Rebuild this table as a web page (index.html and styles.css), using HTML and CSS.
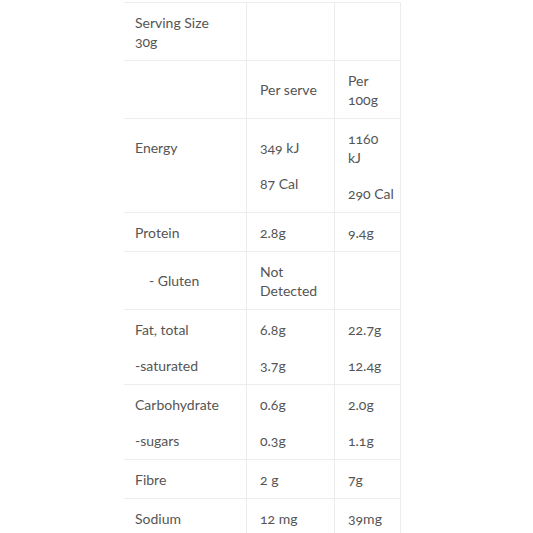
FILE: index.html
```html
<!DOCTYPE html>
<html>
<head>
<meta charset="utf-8">
<link rel="stylesheet" href="styles.css">
</head>
<body>
<div class="wrap">
<table class="nutrition">
  <colgroup>
    <col class="c1">
    <col class="c2">
    <col class="c3">
  </colgroup>
  <tr>
    <td class="label">Serving Size<br>30g</td>
    <td></td>
    <td></td>
  </tr>
  <tr>
    <td class="label"></td>
    <td>Per serve</td>
    <td>Per<br>100g</td>
  </tr>
  <tr>
    <td class="label"><p>Energy</p><p>&nbsp;</p></td>
    <td><p>349 kJ</p><p>87 Cal</p></td>
    <td><p>1160<br>kJ</p><p>290 Cal</p></td>
  </tr>
  <tr>
    <td class="label">Protein</td>
    <td>2.8g</td>
    <td>9.4g</td>
  </tr>
  <tr>
    <td class="label"><span class="indent">- Gluten</span></td>
    <td>Not<br>Detected</td>
    <td></td>
  </tr>
  <tr>
    <td class="label"><p>Fat, total</p><p>-saturated</p></td>
    <td><p>6.8g</p><p>3.7g</p></td>
    <td><p>22.7g</p><p>12.4g</p></td>
  </tr>
  <tr>
    <td class="label"><p>Carbohydrate</p><p>-sugars</p></td>
    <td><p>0.6g</p><p>0.3g</p></td>
    <td><p>2.0g</p><p>1.1g</p></td>
  </tr>
  <tr>
    <td class="label">Fibre</td>
    <td>2 g</td>
    <td>7g</td>
  </tr>
  <tr>
    <td class="label">Sodium</td>
    <td>12 mg</td>
    <td>39mg</td>
  </tr>
</table>
</div>
</body>
</html>
```
FILE: styles.css
```css
html, body {
  margin: 0;
  padding: 0;
  background: #ffffff;
}

.wrap {
  padding: 2px 0 0 124px;
}

.nutrition {
  border-collapse: separate;
  border-spacing: 0;
  table-layout: fixed;
  width: 277px;
  font-family: Lato, "Open Sans", sans-serif;
  font-size: 14px;
  line-height: 19px;
  color: #555555;
  font-variant-numeric: oldstyle-nums;
}

.c1 { width: 123px; }
.c2 { width: 88px; }
.c3 { width: 66px; }

.nutrition td {
  border-top: 1px solid #ececec;
  border-right: 1px solid #ececec;
  padding: 9.5px 4px 9.5px 13px;
  vertical-align: middle;
  text-align: left;
}

.nutrition td.label {
  padding-left: 11px;
}

.nutrition p {
  margin: 0;
}

.nutrition p + p {
  margin-top: 17px;
}

.indent {
  padding-left: 14px;
}
```
